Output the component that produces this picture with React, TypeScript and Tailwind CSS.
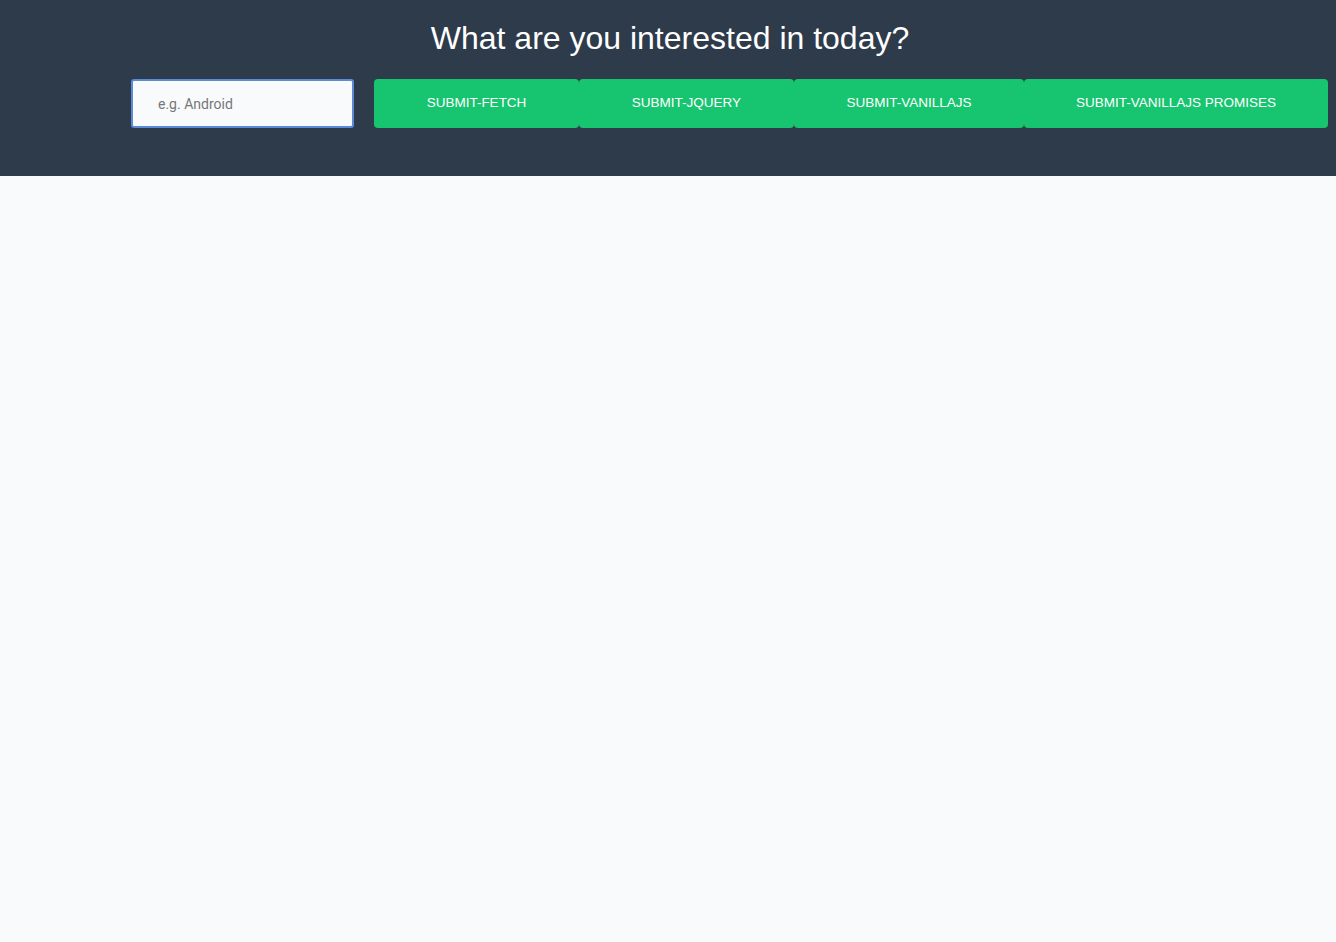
const buttons = [
  { label: "SUBMIT-FETCH", width: "w-[205px]" },
  { label: "SUBMIT-JQUERY", width: "w-[215px]" },
  { label: "SUBMIT-VANILLAJS", width: "w-[230px]" },
  { label: "SUBMIT-VANILLAJS PROMISES", width: "w-[304px]" }
];

export default function App() {
  return (
    <div className="min-h-[942px] bg-[#f8fafc] font-['Liberation_Sans',Arial,sans-serif]">
      <header className="h-[176px] bg-[#2e3b4a] pt-[18px]">
        <h1 className="pl-[4px] text-center text-[32px] leading-[40px] text-white">What are you interested in today?</h1>
        <div className="mt-[21px] flex items-center pl-[131px]">
          <input
            type="text"
            placeholder="e.g. Android"
            className="h-[49px] w-[223px] shrink-0 rounded-[3px] border-2 border-[#5b8ad6] bg-[#f8fafc] pl-[25px] font-['Roboto',sans-serif] text-[14px] text-[#333] outline-none placeholder:text-[#777]"
          />
          <div className="ml-[20px] flex shrink-0">
            {buttons.map((b) => (
              <button
                key={b.label}
                type="button"
                className={`h-[49px] ${b.width} shrink-0 rounded-[4px] bg-[#17c46f] text-center text-[13.5px] whitespace-nowrap text-white`}
              >
                {b.label}
              </button>
            ))}
          </div>
        </div>
      </header>
    </div>
  );
}
